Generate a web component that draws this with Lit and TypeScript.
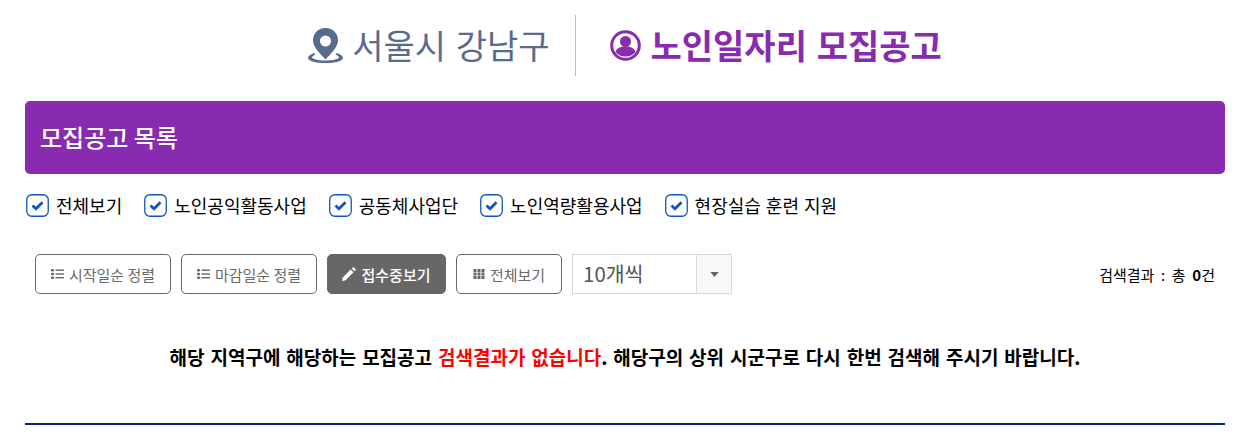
import { LitElement, html, css, svg } from "lit";
import { customElement } from "lit/decorators.js";

const check = html`<svg class="ck" viewBox="0 0 23 23" width="23" height="23"><rect x=".75" y=".75" width="21.500" height="21.500" rx="5" fill="#fff" stroke="#0d56c6" stroke-width="1.300"/><path d="M6.500 11.500l3.500 3.300L16.500 8.300" fill="none" stroke="#0d56c6" stroke-width="2.800"/></svg>`;
const listIc = html`<svg viewBox="0 0 13 12" width="13" height="12"><g fill="#666"><rect x="0" y="1" width="3" height="2.500" rx="1"/><rect x="0" y="4.750" width="3" height="2.500" rx="1"/><rect x="0" y="8.500" width="3" height="2.500" rx="1"/><rect x="4.500" y="1.500" width="8.500" height="1.400"/><rect x="4.500" y="5.300" width="8.500" height="1.400"/><rect x="4.500" y="9" width="8.500" height="1.400"/></g></svg>`;
const cats = ["전체보기", "노인공익활동사업", "공동체사업단", "노인역량활용사업", "현장실습 훈련 지원"];

@customElement("app-root")
export class AppRoot extends LitElement {
  static styles = css`
    :host { display: block; font-family: "Noto Sans CJK KR", "Noto Sans", sans-serif; color: #000; background: #fff; height: 444px; padding: 0 32px 0 25px; box-sizing: border-box; width: 1257px; }
    .head { height: 101px; display: flex; justify-content: center; align-items: flex-start; padding-top: 15px; box-sizing: border-box; }
    .loc { display: flex; align-items: center; height: 61px; font-size: 34px; color: #5a6a8e; padding-right: 25px; border-right: 1px solid #bbb; gap: 9px; word-spacing: 2px; }
    .tit { display: flex; align-items: center; height: 61px; font-size: 34px; font-weight: 700; color: #882bae; padding-left: 34px; gap: 10px; word-spacing: 2px; }
    .lift { padding-bottom: 3px; }
    .bar { height: 73px; background: #882bb0; border-radius: 5px; color: #fff; font-size: 24px; font-weight: 500; display: flex; align-items: center; padding: 0 0 2px 15px; box-sizing: border-box; }
    .cats { display: flex; height: 62px; align-items: center; padding-left: 1px; gap: 22px; font-size: 18px; }
    .cat { display: flex; align-items: center; gap: 7px; }
    .cat span { word-spacing: 1px; }
    .ck { flex: none; }
    .tools { display: flex; align-items: center; padding: 18px 10px 0; gap: 10px; height: 40px; }
    .btn { height: 40px; box-sizing: border-box; border: 1px solid #666; border-radius: 5px; color: #6a6a6a; background: #fff; font-size: 15px; display: flex; align-items: center; justify-content: center; gap: 5px; flex: none; }
    .w136 { width: 136px; }
    .w119 { width: 119px; }
    .w106 { width: 106px; }
    .btn.on { background: #676767; color: #fff; font-weight: 500; }
    .sel { width: 160px; height: 40px; box-sizing: border-box; border: 1px solid #d8d8d8; display: flex; flex: none; }
    .val { flex: 1; font-size: 20.500px; color: #555; display: flex; align-items: center; padding: 0 0 3px 10px; }
    .arr { width: 34px; background: #f8f8f8; border-left: 1px solid #d8d8d8; display: flex; align-items: center; justify-content: center; }
    .res { margin-left: auto; font-size: 15px; word-spacing: 3.300px; }
    .msg { text-align: center; font-size: 19px; font-weight: 700; word-spacing: 1.600px; padding-top: 40px; height: 129px; box-sizing: border-box; line-height: 45px; }
    .msg em { font-style: normal; color: #f00; }
    .rule { height: 2px; background: #00237f; }
  `;
  render() {
    return html`
      <div class="head">
        <div class="loc">
          <svg viewBox="0 0 35 35" width="35" height="35"><path fill-rule="evenodd" fill="#5a6a8e" d="M17.500 0C10 0 5 5.500 5 12.500 5 19 12.500 26 17.500 31.500 22.500 26 30 19 30 12.500 30 5.500 25 0 17.500 0zm0 7.500a5.500 5.500 0 1 1 0 11 5.500 5.500 0 0 1 0-11z"/><path fill="#5a6a8e" d="M6 25C2.500 26.500 0 28 0 30c0 3 8 5 17.500 5S35 33 35 30c0-2-2.500-3.500-6-5l-1.500 1.500c2 .8 3.500 2 3.500 3 0 1.500-6 3-13.500 3S4 31 4 29.500c0-1 1.500-2.200 3.500-3z"/></svg>
          <span class="lift">서울시 강남구</span>
        </div>
        <div class="tit">
          <svg viewBox="0 0 31 31" width="31" height="31"><circle cx="15.500" cy="15.500" r="13.800" fill="none" stroke="#882bae" stroke-width="3"/><circle cx="15.500" cy="11.500" r="5.500" fill="#882bae"/><path fill="#882bae" d="M5.500 22c1-4 5-5.500 10-5.500s9 1.500 10 5.500c-2.500 3-6 4.500-10 4.500S8 25 5.500 22z"/></svg>
          <span class="lift">노인일자리 모집공고</span>
        </div>
      </div>
      <div class="bar">모집공고 목록</div>
      <div class="cats">${cats.map((c) => html`<div class="cat">${check}<span>${c}</span></div>`)}</div>
      <div class="tools">
        <div class="btn w136">${listIc}<span>시작일순 정렬</span></div>
        <div class="btn w136">${listIc}<span>마감일순 정렬</span></div>
        <div class="btn on w119"><svg viewBox="0 0 14 14" width="14" height="14"><path fill="#fff" d="M0 14l.8-3.600L8.700 2.500l2.800 2.800L3.600 13.200zM9.700 1.500l1-1a1 1 0 0 1 1.400 0l1.400 1.400a1 1 0 0 1 0 1.400l-1 1z"/></svg><span>접수중보기</span></div>
        <div class="btn w106"><svg viewBox="0 0 12 12" width="12" height="12"><g fill="#666">${[1, 4.5, 8].flatMap((y) => [0.5, 4.5, 8.5].map((x) => svg`<rect x=${x} y=${y} width="3" height="3"/>`))}</g></svg><span>전체보기</span></div>
        <div class="sel"><div class="val">10개씩</div><div class="arr"><svg viewBox="0 0 10 6" width="9" height="5"><path d="M0 0h10L5 6z" fill="#666"/></svg></div></div>
        <div class="res">검색결과 : 총 <b>0</b>건</div>
      </div>
      <div class="msg">해당 지역구에 해당하는 모집공고 <em>검색결과가 없습니다</em>. 해당구의 상위 시군구로 다시 한번 검색해 주시기 바랍니다.</div>
      <div class="rule"></div>
    `;
  }
}
